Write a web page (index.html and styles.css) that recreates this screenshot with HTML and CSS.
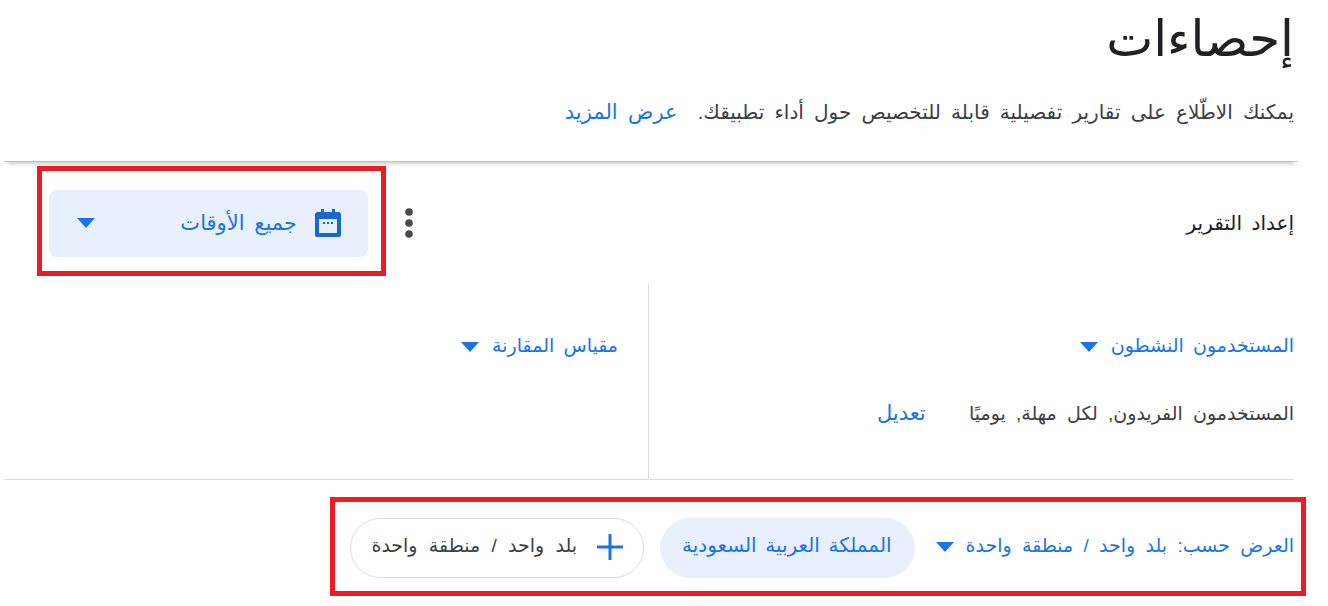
FILE: index.html
```html
<!DOCTYPE html>
<html lang="ar" dir="rtl">
<head>
  <meta charset="UTF-8" />
  <title>إحصاءات</title>
  <link rel="stylesheet" href="styles.css">
</head>
<body>
  <header class="page-header">
    <h1>إحصاءات</h1>
    <p class="intro">
      <span>يمكنك الاطّلاع على تقارير تفصيلية قابلة للتخصيص حول أداء تطبيقك.</span>
      <a href="#" class="link">عرض المزيد</a>
    </p>
  </header>

  <main>
    <section class="report-row">
      <span class="report-title">إعداد التقرير</span>
      <div class="report-actions">
        <button class="icon-btn" aria-label="more">
          <svg width="10" height="32" viewBox="0 0 10 32"><circle cx="5" cy="5" r="3.800"/><circle cx="5" cy="16" r="3.800"/><circle cx="5" cy="27" r="3.800"/></svg>
        </button>
        <div class="date-select">
          <svg class="cal-icon" width="28" height="30" viewBox="0 0 28 30">
            <path fill-rule="evenodd" d="M7 1h3v3h8V1h3v3h3a3 3 0 0 1 3 3v20a2 2 0 0 1-2 2H3a2 2 0 0 1-2-2V7a3 3 0 0 1 3-3h3zM5 11v14h18V11z"/>
            <rect x="9" y="14" width="2" height="2"/><rect x="13" y="14" width="2" height="2"/><rect x="17" y="14" width="2" height="2"/>
          </svg>
          <span class="date-label">جميع الأوقات</span>
          <span class="arrow arrow-push"></span>
        </div>
      </div>
    </section>

    <section class="metrics">
      <div class="metric-col metric-main">
        <a href="#" class="metric-select">المستخدمون النشطون<span class="arrow"></span></a>
        <p class="metric-desc">
          <span>المستخدمون الفريدون, لكل مهلة, يوميًا</span>
          <a href="#" class="link">تعديل</a>
        </p>
      </div>
      <div class="metric-col metric-compare">
        <a href="#" class="metric-select">مقياس المقارنة<span class="arrow"></span></a>
      </div>
    </section>

    <section class="filter-row">
      <a href="#" class="filter-select">العرض حسب: بلد واحد / منطقة واحدة<span class="arrow"></span></a>
      <span class="chip chip-active">المملكة العربية السعودية</span>
      <span class="chip chip-add">
        <svg width="26" height="26" viewBox="0 0 26 26"><path d="M11.500 0h3v11.500H26v3H14.500V26h-3V14.500H0v-3h11.500z"/></svg>
        بلد واحد / منطقة واحدة
      </span>
    </section>
  </main>

  <div class="mark mark-date"></div>
  <div class="mark mark-filter"></div>
</body>
</html>
```

FILE: styles.css
```css
body {
  font-family: "Liberation Sans", "DejaVu Sans", sans-serif;
  margin: 0;
  padding: 0;
  background-color: #fff;
  color: #3c4043;
  font-size: 19px;
  word-spacing: 5px;
}

a {
  text-decoration: none;
}

.link, .metric-select, .filter-select {
  color: #1a73e8;
}

.page-header {
  width: 1294px;
  height: 162px;
  box-sizing: border-box;
  margin-right: 30px;
  padding-right: 4px;
  border-bottom: 1px solid #c4c4c4;
  box-shadow: 0 6px 4px -4px rgba(0, 0, 0, 0.2);
}

h1 {
  margin: 0;
  padding-top: 12px;
  font-size: 50px;
  line-height: 54px;
  font-weight: normal;
  word-spacing: 0;
  color: #202124;
}

.intro {
  margin: 34px 0 0;
  line-height: 24px;
  font-size: 20px;
  word-spacing: 4.6px;
}

.intro .link {
  margin-right: 10px;
  font-size: 21px;
}

main {
  margin-right: 34px;
  margin-left: 34px;
}

.report-row {
  display: flex;
  align-items: center;
  justify-content: space-between;
  height: 122px;
  padding-left: 15px;
}

.report-title {
  font-size: 20px;
  word-spacing: 4px;
  color: #202124;
}

.report-actions {
  display: flex;
  align-items: center;
  gap: 36px;
}

.icon-btn {
  display: flex;
  padding: 0;
  background: none;
  border: none;
  fill: #4a4a4a;
}

.date-select {
  display: flex;
  align-items: center;
  width: 319px;
  height: 67px;
  box-sizing: border-box;
  padding: 0 26px 0 28px;
  background: #e8f0fe;
  border-radius: 8px;
  color: #1a73e8;
  font-size: 21px;
  word-spacing: 4px;
}

.cal-icon {
  fill: #1967d2;
}

.date-label {
  margin-right: 17px;
}

.arrow {
  display: inline-block;
  width: 0;
  height: 0;
  margin-right: 13px;
  vertical-align: middle;
  border-left: 9px solid transparent;
  border-right: 9px solid transparent;
  border-top: 10px solid #1a73e8;
}

.arrow-push {
  margin-right: auto;
}

.metrics {
  display: flex;
  height: 195px;
  margin-left: -30px;
  border-bottom: 1px solid #dadce0;
}

.metric-col {
  padding-top: 50px;
  box-sizing: border-box;
}

.metric-main {
  width: 646px;
  border-left: 1px solid #dadce0;
}

.metric-compare {
  padding-right: 30px;
}

.metric-select {
  word-spacing: 4px;
}

.metric-desc {
  margin: 44px 0 0;
  color: #3c4043;
}

.metric-desc .link {
  margin-right: 33px;
  font-size: 21px;
}

.filter-row {
  display: flex;
  align-items: center;
  padding-top: 38px;
}

.filter-select {
  margin-left: 21px;
  padding-bottom: 5px;
}

.filter-select .arrow {
  margin-right: 12px;
}

.chip {
  display: flex;
  align-items: center;
  height: 60px;
  box-sizing: border-box;
  border: 1px solid #dadce0;
  border-radius: 30px;
  padding-bottom: 6px;
}

.chip-active {
  padding-right: 22px;
  padding-left: 21px;
  margin-left: 16px;
  background: #e8f0fe;
  border-color: #e8f0fe;
  color: #1a73e8;
  font-size: 20px;
  word-spacing: 3px;
}

.chip-add {
  gap: 20px;
  padding-right: 20px;
  padding-left: 20px;
  word-spacing: 6px;
  fill: #1a73e8;
}

.chip-add svg {
  margin-top: 4px;
}

/* red boxes drawn over the screenshot */
.mark {
  position: absolute;
  box-sizing: border-box;
  border: 5px solid #ed1c24;
}

.mark-date {
  left: 37px;
  top: 166px;
  width: 349px;
  height: 110px;
}

.mark-filter {
  left: 330px;
  top: 497px;
  width: 976px;
  height: 99px;
}
```
